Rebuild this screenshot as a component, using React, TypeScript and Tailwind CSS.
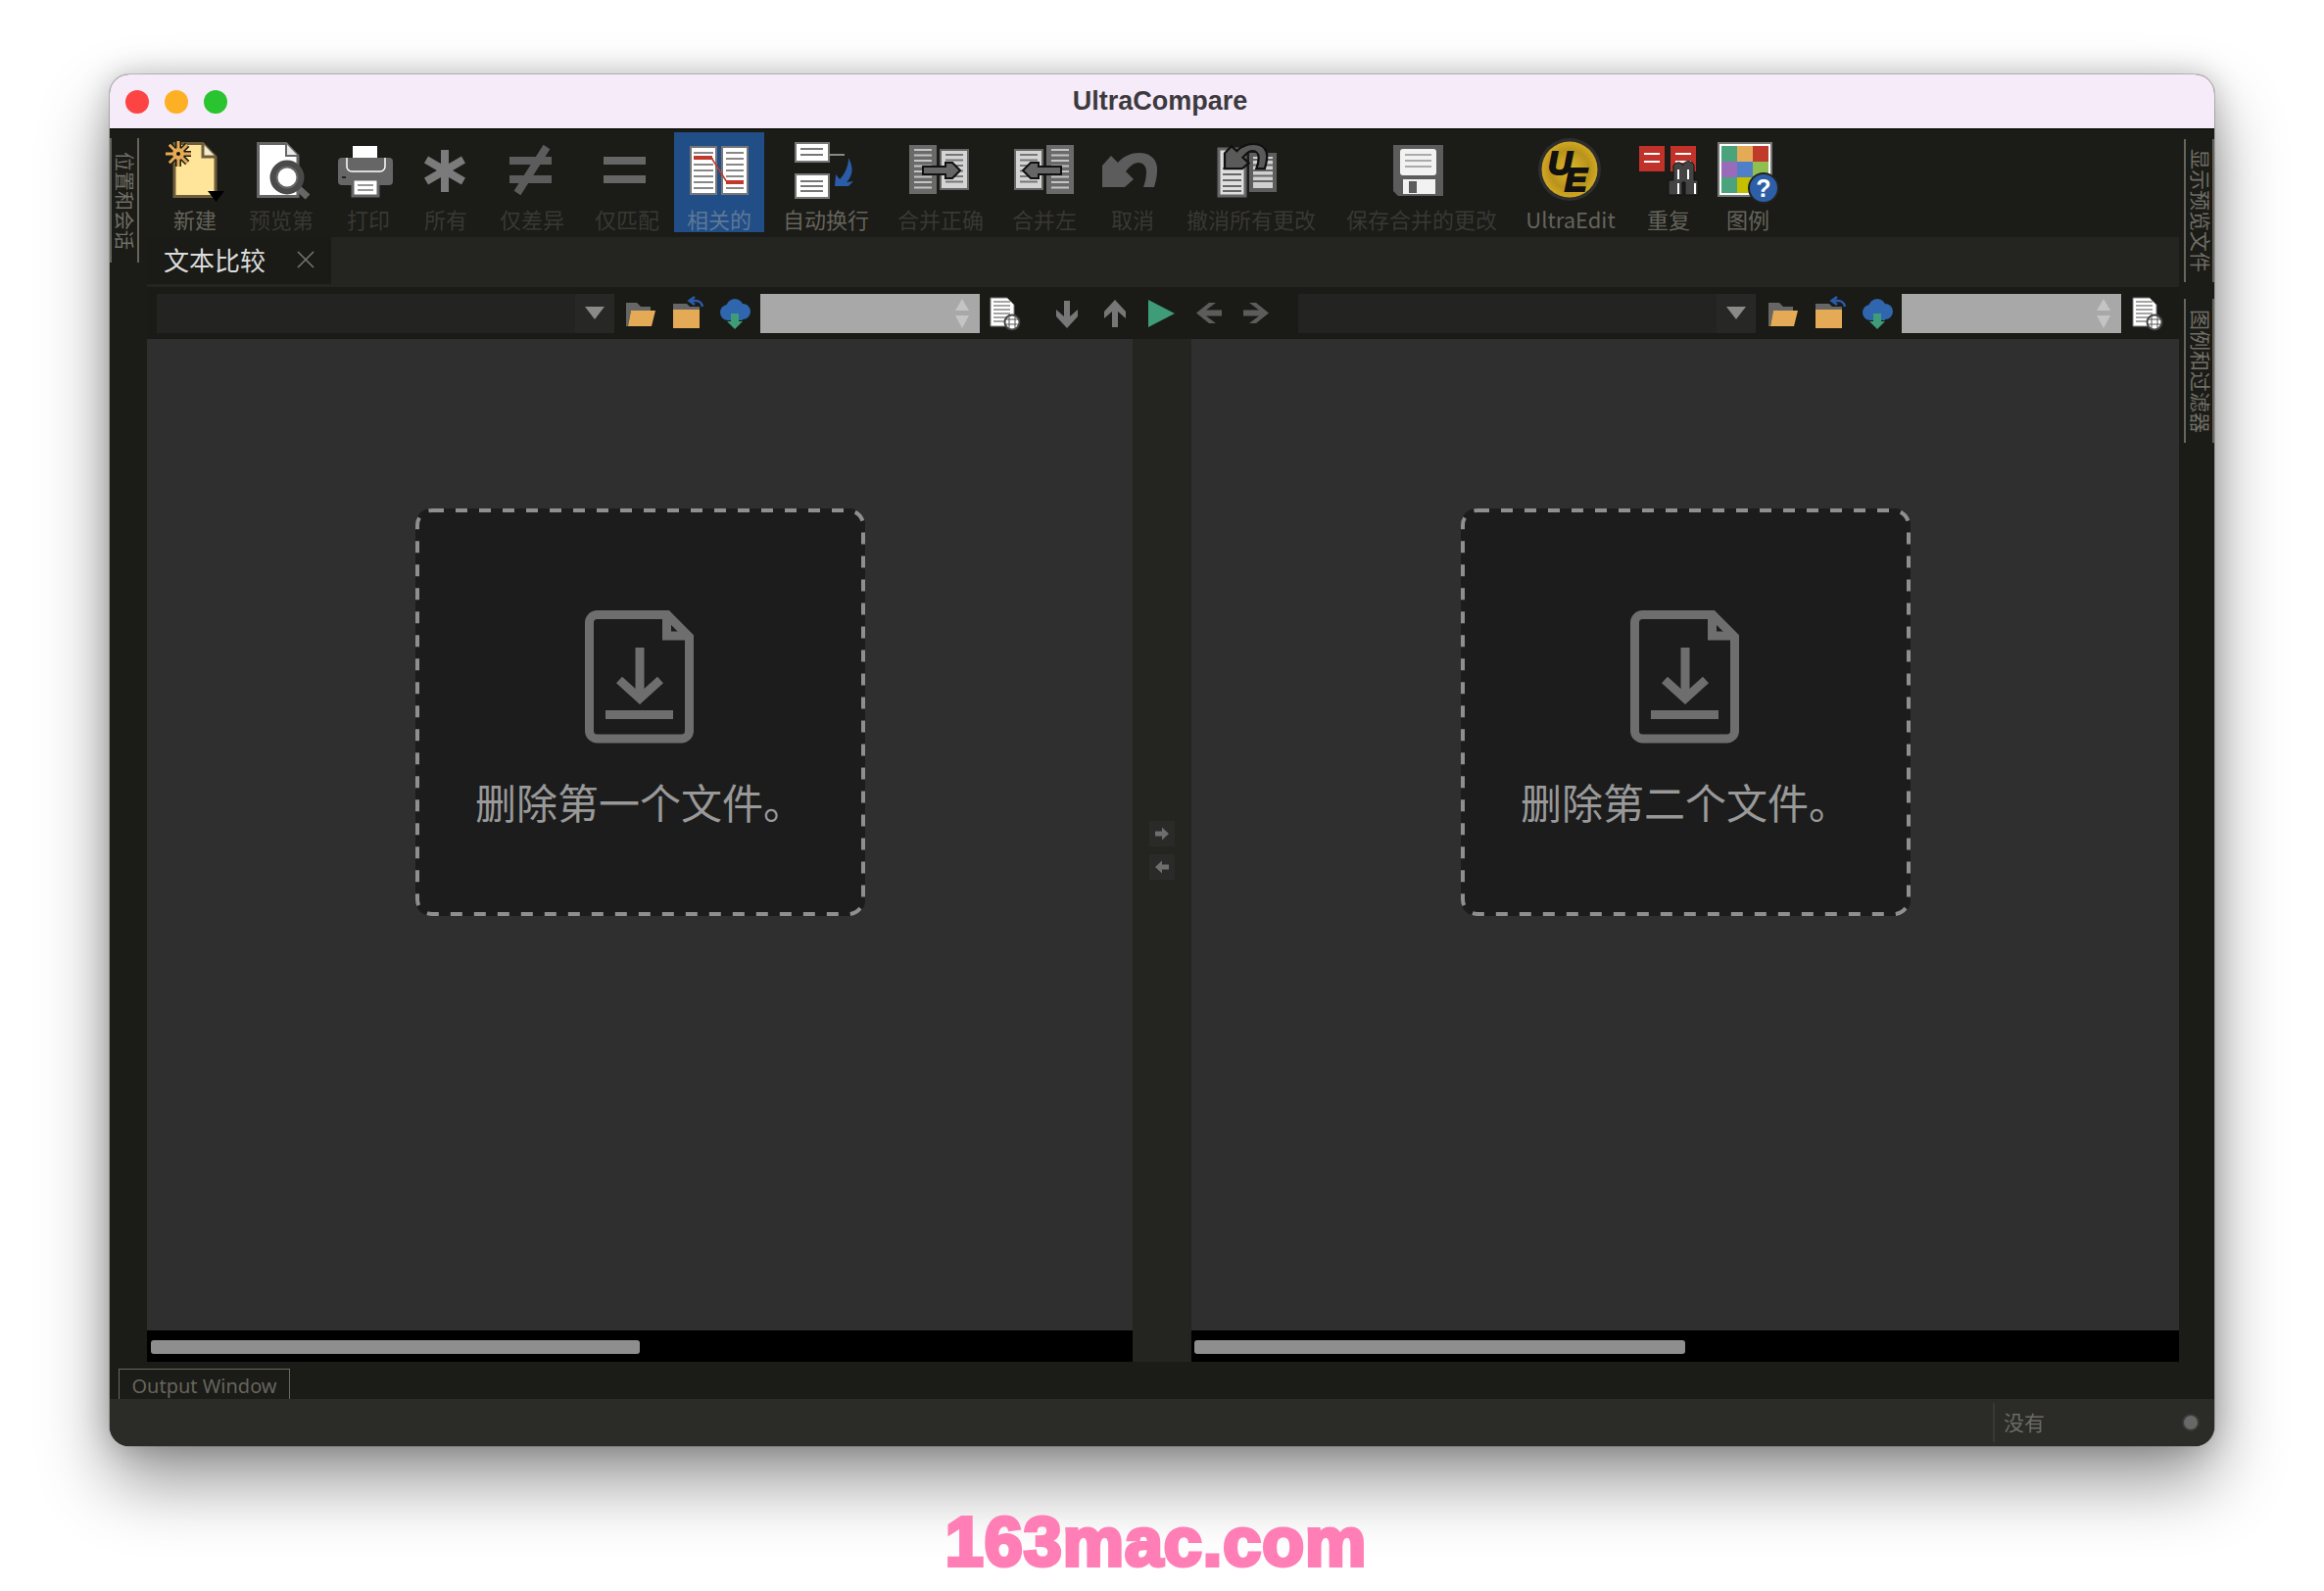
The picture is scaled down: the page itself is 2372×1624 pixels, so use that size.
import React from "react";

const GREY = "#5c5c5c";

function Lines({ x1, x2, ys, color = "#8a8a8a", w = 2 }: { x1: number; x2: number; ys: number[]; color?: string; w?: number }) {
  return (
    <>
      {ys.map((y) => (
        <line key={y} x1={x1} x2={x2} y1={y} y2={y} stroke={color} strokeWidth={w} />
      ))}
    </>
  );
}

function range(a: number, b: number, step: number) {
  const out: number[] = [];
  for (let v = a; v <= b; v += step) out.push(v);
  return out;
}

const UNDO = "M1125 169 L1134 159 L1141 166 C1147 159 1155 156 1163 156 C1176 156 1182 165 1181 175 C1181 181 1179 187 1178 191 H1167 C1169 186 1170 180 1170 175 C1170 170 1167 166 1162 166 C1157 166 1153 170 1149 175 L1157 183 L1148 191 H1125 Z";

function Ico({ cx, w = 80, children }: { cx: number; w?: number; children: React.ReactNode }) {
  return (
    <svg width={w} height={68} viewBox={`${cx - w / 2} 140 ${w} 68`} className="block shrink-0">
      {children}
    </svg>
  );
}

function IconNew() {
  const spokes = [0, 45, 90, 135, 180, 225, 270, 315];
  return (
    <Ico cx={199}>
      <path d="M178 146.5 H207 L220 160 V200.5 H178 Z" fill="#ffe599" stroke="#6d5d3a" strokeWidth="3" />
      <path d="M207 146.5 V160 H220" fill="#f3ead0" stroke="#6d5d3a" strokeWidth="3" />
      {spokes.map((a) => (
        <line key={a} x1="182" y1="157" x2={182 + 13 * Math.cos((a * Math.PI) / 180)} y2={157 + 13 * Math.sin((a * Math.PI) / 180)} stroke="#1a1a16" strokeWidth="6" />
      ))}
      {spokes.map((a) => (
        <line key={`o${a}`} x1="182" y1="157" x2={182 + 13 * Math.cos((a * Math.PI) / 180)} y2={157 + 13 * Math.sin((a * Math.PI) / 180)} stroke="#e5aa55" strokeWidth="3" />
      ))}
      <circle cx="182" cy="157" r="6" fill="#e5aa55" />
      <circle cx="182" cy="157" r="2" fill="#111" />
      <path d="M212 195 H229 L220.5 206 Z" fill="#000" />
    </Ico>
  );
}

function IconPreview() {
  return (
    <Ico cx={287}>
      <path d="M263.5 146.5 H292 L304 159 V200.5 H263.5 Z" fill="#fff" stroke="#666" strokeWidth="3" />
      <path d="M292 146.5 V159 H304" fill="#e8e8e8" stroke="#666" strokeWidth="2" />
      <line x1="302" y1="190" x2="314" y2="201" stroke="#666" strokeWidth="7" />
      <circle cx="293" cy="181" r="14" fill="#fff" stroke="#4a4a4a" strokeWidth="7" />
      <circle cx="293" cy="181" r="10.5" fill="none" stroke="#666" strokeWidth="2" />
    </Ico>
  );
}

function IconPrint() {
  return (
    <Ico cx={376}>
      <rect x="360" y="149" width="25" height="12" fill="#fff" />
      <rect x="345" y="161" width="56" height="28" rx="4" fill="#666" />
      <path d="M354 161 V170 a5 5 0 0 0 5 5 H388 a5 5 0 0 0 5 -5 V161" fill="none" stroke="#fff" strokeWidth="1.5" />
      <rect x="349" y="180" width="4" height="2" fill="#222" />
      <rect x="360" y="183" width="26" height="17" fill="#fff" stroke="#666" strokeWidth="3" />
      <Lines x1={365} x2={381} ys={[189, 194]} color="#999" />
    </Ico>
  );
}

function IconAll() {
  return (
    <Ico cx={455}>
      <g stroke="#7b7b7b" strokeWidth="8">
        <line x1="454" y1="153" x2="454" y2="196" />
        <line x1="435" y1="163" x2="473" y2="185" />
        <line x1="473" y1="163" x2="435" y2="185" />
      </g>
    </Ico>
  );
}

function IconNe() {
  return (
    <Ico cx={543}>
      <g fill={GREY}>
        <rect x="520" y="160" width="43" height="8" />
        <rect x="520" y="179" width="43" height="8" />
      </g>
      <line x1="558" y1="150" x2="528" y2="197" stroke={GREY} strokeWidth="8" />
    </Ico>
  );
}

function IconEq() {
  return (
    <Ico cx={640}>
      <g fill="#666">
        <rect x="616" y="160" width="43" height="8" />
        <rect x="616" y="179" width="43" height="8" />
      </g>
    </Ico>
  );
}

function IconRelated() {
  return (
    <Ico cx={734}>
      <rect x="705" y="150" width="26" height="48" fill="#fff" stroke="#777" strokeWidth="2" />
      <rect x="737" y="150" width="26" height="48" fill="#fff" stroke="#777" strokeWidth="2" />
      <Lines x1={708} x2={728} ys={range(156, 194, 6)} color="#888" />
      <Lines x1={741} x2={759} ys={range(156, 194, 6)} color="#888" />
      <rect x="708" y="159" width="19" height="4" fill="#c0392b" />
      <rect x="741" y="184" width="18" height="4" fill="#c0392b" />
      <line x1="726" y1="161" x2="742" y2="186" stroke="#c0392b" strokeWidth="1.5" />
    </Ico>
  );
}

function IconWrap() {
  return (
    <Ico cx={843}>
      <rect x="812" y="146" width="34" height="19" fill="#fff" stroke="#777" strokeWidth="2" />
      <rect x="812" y="178" width="34" height="24" fill="#fff" stroke="#777" strokeWidth="2" />
      <Lines x1={817} x2={840} ys={[152, 158]} color="#777" />
      <line x1="846" y1="158" x2="862" y2="158" stroke="#888" strokeWidth="2" />
      <Lines x1={817} x2={840} ys={[185, 190, 195]} color="#777" />
      <path d="M866 161 C872 172 870 180 864 186 L871 185 L866 190 H852 L853 178 L857 183 C862 178 866 170 866 161 Z" fill="#2a5ca8" />
    </Ico>
  );
}

function MergeArrowRight() {
  return <path d="M942 170 H965 V166 L972 166 L980 174 L972 182 H965 V178 H942 Z" fill="#666" stroke="#111" strokeWidth="2" />;
}

function IconMergeRight() {
  return (
    <Ico cx={960}>
      <rect x="928" y="148" width="28" height="50" fill="#6a6a6a" />
      <Lines x1={933} x2={951} ys={range(153, 194, 5.5)} color="#c4c4c4" />
      <rect x="960" y="153" width="28" height="40" fill="#d4d4d4" stroke="#666" strokeWidth="2" />
      <Lines x1={965} x2={983} ys={range(158, 190, 5.5)} color="#777" />
      <MergeArrowRight />
    </Ico>
  );
}

function IconMergeLeft() {
  return (
    <Ico cx={1066}>
      <rect x="1068" y="148" width="28" height="50" fill="#6a6a6a" />
      <Lines x1={1073} x2={1091} ys={range(153, 194, 5.5)} color="#c4c4c4" />
      <rect x="1036" y="153" width="28" height="40" fill="#d4d4d4" stroke="#666" strokeWidth="2" />
      <Lines x1={1041} x2={1059} ys={range(158, 190, 5.5)} color="#777" />
      <path d="M1083 170 H1060 V166 L1052 166 L1044 174 L1052 182 H1060 V178 H1083 Z" fill="#666" stroke="#111" strokeWidth="2" />
    </Ico>
  );
}

function IconUndo() {
  return (
    <Ico cx={1156}>
      <path d={UNDO} fill={GREY} />
    </Ico>
  );
}

function IconUndoAll() {
  return (
    <Ico cx={1277}>
      <rect x="1244" y="152" width="27" height="48" fill="#dedede" stroke="#666" strokeWidth="3" />
      <Lines x1={1248} x2={1267} ys={[172, 178, 184, 190, 195]} color="#666" />
      <rect x="1275" y="156" width="28" height="40" fill="#5e5e5e" />
      <rect x="1279" y="160" width="20" height="32" fill="#d0d0d0" />
      <Lines x1={1279} x2={1299} ys={range(163, 190, 5.5)} color="#666" />
      <g transform="translate(1250 147) scale(0.77 0.72) translate(-1125 -156)">
        <path d={UNDO} fill="#5a5a5a" stroke="#111" strokeWidth="3" />
      </g>
    </Ico>
  );
}

function IconSave() {
  return (
    <Ico cx={1451}>
      <path d="M1422 148 H1473 V200 H1427 L1422 195 Z" fill={GREY} />
      <rect x="1429" y="152" width="37" height="27" rx="3" fill="#f2f2f2" />
      <Lines x1={1434} x2={1461} ys={[158, 164, 170]} color="#aaa" />
      <rect x="1432" y="183" width="33" height="15" fill="#f2f2f2" />
      <rect x="1438" y="185" width="8" height="12" fill={GREY} />
    </Ico>
  );
}

function IconUE() {
  return (
    <Ico cx={1603}>
      <defs>
        <radialGradient id="ueGold" cx="50%" cy="50%" r="50%">
          <stop offset="0%" stopColor="#e2b92a" />
          <stop offset="70%" stopColor="#b8931c" />
          <stop offset="100%" stopColor="#d2a821" />
        </radialGradient>
      </defs>
      <ellipse cx="1602" cy="173" rx="32" ry="32" fill="#2e2e2e" />
      <ellipse cx="1602" cy="173" rx="28.5" ry="28.5" fill="url(#ueGold)" />
      <text fontFamily="'Liberation Sans',sans-serif" fontWeight="700" fontStyle="italic" fontSize="34" fill="#111" stroke="#111" strokeWidth="2">
        <tspan x="1580" y="178">U</tspan>
        <tspan x="1597" y="195">E</tspan>
      </text>
    </Ico>
  );
}

function IconRepeat() {
  return (
    <Ico cx={1703}>
      <rect x="1673" y="149" width="26" height="26" fill="#c0322a" />
      <rect x="1705" y="149" width="26" height="26" fill="#c0322a" />
      <Lines x1={1678} x2={1694} ys={[157, 165]} color="#fff" />
      <Lines x1={1710} x2={1726} ys={[157, 165]} color="#fff" />
      <path d="M1708 172 a5 5 0 0 1 9.5 -3 a5 5 0 0 1 11.5 3 V184 H1733 V199 H1720 V186 H1717 V199 H1703 V184 H1708 Z" fill="#444" stroke="#111" strokeWidth="1" />
      <g stroke="#fff" strokeWidth="2">
        <line x1="1713" y1="173" x2="1713" y2="183" />
        <line x1="1723" y1="173" x2="1723" y2="183" />
        <line x1="1713" y1="187" x2="1713" y2="198" />
        <line x1="1730" y1="187" x2="1730" y2="198" />
      </g>
    </Ico>
  );
}

function IconLegend() {
  const cells = [
    ["#4aa37c", "#e5aa55", "#c0392b"],
    ["#9a6bb8", "#4f7fc8", "#8fbf4f"],
    ["#4aa37c", "#c4c000", "#fff"],
  ];
  return (
    <Ico cx={1784}>
      <rect x="1754" y="146" width="54" height="54" fill="#fff" stroke="#777" strokeWidth="2" />
      {cells.map((row, r) =>
        row.map((c, i) => <rect key={`${r}${i}`} x={1757 + i * 16} y={149 + r * 16} width="16" height="16" fill={c} />)
      )}
      <circle cx="1800" cy="192" r="15" fill="#2d5fa8" stroke="#222" strokeWidth="2" />
      <text x="1800" y="201" textAnchor="middle" fontFamily="'Liberation Sans',sans-serif" fontWeight="700" fontSize="25" fill="#fff">?</text>
    </Ico>
  );
}

type Tool = { label: string; w: string; icon: React.ReactNode; tone: string; bg?: string };

const ON = "text-[#65645c]";
const OFF = "text-[#383834]";

const TOOLS: Tool[] = [
  { label: "新建", w: "w-[78px]", icon: <IconNew />, tone: ON },
  { label: "预览第", w: "w-[98px]", icon: <IconPreview />, tone: OFF },
  { label: "打印", w: "w-[80px]", icon: <IconPrint />, tone: OFF },
  { label: "所有", w: "w-[78px]", icon: <IconAll />, tone: OFF },
  { label: "仅差异", w: "w-[98px]", icon: <IconNe />, tone: OFF },
  { label: "仅匹配", w: "w-[96px]", icon: <IconEq />, tone: OFF },
  { label: "相关的", w: "w-[92px]", icon: <IconRelated />, tone: "text-[#5f7896]", bg: "bg-[#214e87]" },
  { label: "自动换行", w: "w-[126px]", icon: <IconWrap />, tone: ON },
  { label: "合并正确", w: "w-[108px]", icon: <IconMergeRight />, tone: OFF },
  { label: "合并左", w: "w-[104px]", icon: <IconMergeLeft />, tone: OFF },
  { label: "取消", w: "w-[76px]", icon: <IconUndo />, tone: OFF },
  { label: "撤消所有更改", w: "w-[166px]", icon: <IconUndoAll />, tone: OFF },
  { label: "保存合并的更改", w: "w-[182px]", icon: <IconSave />, tone: OFF },
  { label: "UltraEdit", w: "w-[122px]", icon: <IconUE />, tone: ON },
  { label: "重复", w: "w-[78px]", icon: <IconRepeat />, tone: ON },
  { label: "图例", w: "w-[84px]", icon: <IconLegend />, tone: ON },
];

function SideTab({ label, cls }: { label: string; cls: string }) {
  return (
    <div className={`flex items-center justify-center whitespace-nowrap border-[#66655c] text-[#706f66] leading-[24px] [writing-mode:vertical-rl] [text-orientation:sideways] ${cls}`}>
      {label}
    </div>
  );
}

function Combo() {
  return (
    <div className="flex h-[40px] w-[467px] shrink-0 bg-[#232321]">
      <div className="flex-1" />
      <div className="flex w-[40px] items-center justify-center bg-[#272725]">
        <svg width="20" height="13" viewBox="0 0 20 13">
          <path d="M0 0 H20 L10 13 Z" fill="#8a8a8a" />
        </svg>
      </div>
    </div>
  );
}

function Spin() {
  return (
    <div className="flex h-[40px] w-[224px] shrink-0 items-center justify-end bg-[#a8a8a8] pr-[10px]">
      <svg width="16" height="32" viewBox="0 0 16 32">
        <path d="M8 1 L15 13 H1 Z M1 18 H15 L8 31 Z" fill="#c4c4c4" />
      </svg>
    </div>
  );
}

function FileTools({ shift = 0 }: { shift?: number }) {
  return (
    <svg width="149" height="53" viewBox="0 0 149 53" className="shrink-0">
      <g transform={`translate(${shift} 0)`}>
        <path d="M12 40 V16 H23 L27 20 H37 V24 H17 L14 40 Z" fill="#666" />
        <path d="M17 24 H42 L38 40 H14 Z" fill="#e5aa55" />
        <path d="M60 23 V17 H74 L77 20 H87 V23 Z" fill="#666" />
        <rect x="60" y="23" width="27" height="19" fill="#e5aa55" />
        <path d="M90 20 a7 7 0 0 0 -7 -6 H77 M82 10 L76.5 14 L82 18" fill="none" stroke="#2a5ca8" strokeWidth="2.5" />
        <g fill="#2f66ad">
          <circle cx="116" cy="26" r="8" />
          <circle cx="123" cy="21" r="9" />
          <circle cx="131" cy="25" r="8" />
          <rect x="116" y="24" width="15" height="10" />
        </g>
        <path d="M119 27 H127 V35 H131 L123 43 L115 35 H119 Z" fill="#3f9c78" />
      </g>
    </svg>
  );
}

function DocGlobe() {
  return (
    <g>
      <path d="M1 11 H18 L25 18 V40 H1 Z" fill="#fff" stroke="#777" strokeWidth="1" />
      <Lines x1={4} x2={21} ys={[15, 19, 23, 27, 31, 35]} color="#888" w={1.5} />
      <circle cx="23" cy="36" r="7.5" fill="#fff" stroke="#444" strokeWidth="2" />
      <g stroke="#555" strokeWidth="1">
        <line x1="16" x2="30" y1="33" y2="33" />
        <line x1="16" x2="30" y1="38" y2="38" />
        <line x1="20" x2="20" y1="29" y2="43" />
        <line x1="26" x2="26" y1="29" y2="43" />
      </g>
    </g>
  );
}

function MiddleTools() {
  return (
    <svg width="325" height="53" viewBox="1000 293 325 53" className="shrink-0">
      <g transform="translate(1010 293)">
        <DocGlobe />
      </g>
      <path d="M1086 307 H1092 V323 L1100 316 V323 L1089 335 L1078 323 V316 L1086 323 Z" fill="#777" />
      <path d="M1135 334 H1141 V318 L1149 325 V318 L1138 306 L1127 318 V325 L1135 318 Z" fill="#777" />
      <path d="M1172 306 L1199 320 L1172 334 Z" fill="#3f9c78" />
      <path d="M1234 309 L1221 319.5 L1234 330 H1241 L1231 322.5 H1247 V316.5 H1231 L1241 309 Z" fill={GREY} />
      <path d="M1282 309 L1295 319.5 L1282 330 H1275 L1285 322.5 H1269 V316.5 H1285 L1275 309 Z" fill={GREY} />
    </svg>
  );
}

function DropZone({ text }: { text: string }) {
  return (
    <div className="relative flex h-[416px] w-[459px] flex-col items-center rounded-[16px] bg-[#1c1c1c] pt-[104px]">
      <svg width="459" height="416" viewBox="0 0 459 416" className="absolute inset-0">
        <rect x="2" y="2" width="455" height="412" rx="15" fill="none" stroke="#8f8f8f" strokeWidth="4" strokeDasharray="12 12" />
      </svg>
      <svg width="111" height="136" viewBox="0 0 111 136" className="-ml-[2px] block">
        <g fill="none" stroke="#6e6e6e" strokeWidth="9">
          <path d="M12.5 4.5 H84 L106.5 27 V123 a8 8 0 0 1 -8 8 H12.5 a8 8 0 0 1 -8 -8 V12.5 a8 8 0 0 1 8 -8 Z" />
          <path d="M83.5 5 V26 H106" />
          <line x1="56" y1="38" x2="56" y2="86" />
          <path d="M35 71 L56 90 L77 71" />
          <line x1="21" y1="106.5" x2="90" y2="106.5" />
        </g>
      </svg>
      <div className="mt-[31px] text-[42px] leading-[56px] text-[#999999]">{text}</div>
    </div>
  );
}

function Pane({ w, text, thumb }: { w: string; text: string; thumb: string }) {
  return (
    <div className={`flex shrink-0 flex-col ${w}`}>
      <div className="flex flex-1 justify-center bg-[#2f2f2f] pt-[173px]">
        <DropZone text={text} />
      </div>
      <div className="h-[32px] bg-black pt-[10px]">
        <div className={`h-[14px] rounded-[3px] bg-[#8e8e8e] ${thumb}`} />
      </div>
    </div>
  );
}

export default function App() {
  return (
    <div className="flex h-[1624px] w-[2372px] flex-col items-center overflow-hidden bg-white pt-[76px] font-['Noto_Sans_CJK_SC',sans-serif]">
      <div className="flex h-[1400px] w-[2148px] shrink-0 flex-col overflow-hidden rounded-[20px] bg-[#1b1b17] shadow-[0_36px_70px_rgba(0,0,0,0.42),0_0_30px_rgba(0,0,0,0.22),0_0_0_1px_rgba(0,0,0,0.18)]">
        <div className="flex h-[56px] shrink-0 items-center border-b border-black bg-[#f6ebf9] pl-[16px]">
          <div className="flex w-[120px] gap-[16px]">
            <span className="h-[24px] w-[24px] rounded-full bg-[#fd4444]" />
            <span className="h-[24px] w-[24px] rounded-full bg-[#feb024]" />
            <span className="h-[24px] w-[24px] rounded-full bg-[#29c430]" />
          </div>
          <div className="flex-1 pr-[140px] text-center font-['Liberation_Sans',sans-serif] text-[27px] font-bold text-[#3c3a3e]">UltraCompare</div>
        </div>

        <div className="flex min-h-0 flex-1">
          <div className="w-[38px] shrink-0 pt-[9px]">
            <SideTab label="位置和会话" cls="h-[127px] w-[30px] border-y-2 border-r-2 text-[20px]" />
          </div>

          <div className="flex w-[2074px] shrink-0 flex-col pb-[7px]">
            <div className="flex h-[110px] shrink-0 pl-[10px] pt-[3px]">
              {TOOLS.map((t) => (
                <div key={t.label} className={`flex h-[102px] shrink-0 flex-col items-center pt-[5px] ${t.w} ${t.bg ?? ""}`}>
                  {t.icon}
                  <div className={`mt-[2px] whitespace-nowrap text-[22px] leading-[26px] ${t.tone}`}>{t.label}</div>
                </div>
              ))}
            </div>

            <div className="flex h-[51px] shrink-0 bg-[#242421]">
              <div className="flex h-[48px] w-[188px] items-center justify-between bg-[#1a1a17] pb-[3px] pl-[17px] pr-[17px]">
                <span className="text-[26px] text-[#dddddd]">文本比较</span>
                <svg width="18" height="18" viewBox="0 0 18 18">
                  <path d="M1 1 L17 17 M17 1 L1 17" stroke="#777" strokeWidth="1.5" />
                </svg>
              </div>
            </div>

            <div className="flex h-[53px] shrink-0 items-center bg-[#1a1a17] pl-[10px]">
              <Combo />
              <FileTools />
              <Spin />
              <MiddleTools />
              <Combo />
              <FileTools shift={1} />
              <Spin />
              <svg width="58" height="53" viewBox="0 0 58 53" className="shrink-0">
                <g transform="translate(11 0)">
                  <DocGlobe />
                </g>
              </svg>
            </div>

            <div className="flex min-h-0 flex-1">
              <Pane w="w-[1006px]" text="删除第一个文件。" thumb="ml-[4px] w-[499px]" />
              <div className="flex w-[60px] shrink-0 flex-col items-center bg-[#242421] pt-[492px]">
                <div className="flex h-[26px] w-[26px] items-center justify-center bg-[#2a2a28]">
                  <svg width="14" height="14" viewBox="0 0 14 14">
                    <path d="M0 4.5 H7 V0.5 L14 7 L7 13.5 V9.5 H0 Z" fill="#6e6e6e" />
                  </svg>
                </div>
                <div className="mt-[8px] flex h-[26px] w-[26px] items-center justify-center bg-[#2a2a28]">
                  <svg width="14" height="14" viewBox="0 0 14 14">
                    <path d="M14 4.5 H7 V0.5 L0 7 L7 13.5 V9.5 H14 Z" fill="#6e6e6e" />
                  </svg>
                </div>
              </div>
              <Pane w="w-[1008px]" text="删除第二个文件。" thumb="ml-[3px] w-[501px]" />
            </div>
          </div>

          <div className="flex w-[36px] shrink-0 flex-col items-end pt-[10px]">
            <SideTab label="显示预览文件" cls="h-[146px] w-[31px] border-y-2 border-l-2 pl-[4px] text-[21px]" />
            <SideTab label="图例和过滤器" cls="mt-[17px] h-[147px] w-[31px] border-y-2 border-l-2 pl-[4px] text-[21px]" />
          </div>
        </div>

        <div className="flex h-[31px] shrink-0 pl-[9px]">
          <div className="flex w-[175px] items-center justify-center border-x border-t border-[#6a695f] pt-[3px] font-['Noto_Sans',sans-serif] text-[20px] leading-[24px] text-[#66655d]">Output Window</div>
        </div>

        <div className="flex h-[48px] shrink-0 items-center justify-end bg-[#2b2b28]">
          <div className="flex h-[40px] w-[226px] items-center border-l-2 border-[#383835] pl-[9px] pr-[15px]">
            <span className="text-[21px] text-[#6a6a66]">没有</span>
            <span className="ml-auto h-[18px] w-[18px] rounded-full border-2 border-[#3a3a38] bg-[#686868]" />
          </div>
        </div>
      </div>

      <div className="mr-[12px] mt-[50px] font-['Liberation_Sans',sans-serif] text-[70px] font-bold leading-[96px] tracking-[1px] text-[#ff7eb6] [-webkit-text-stroke:4px_#ff7eb6]">163mac.com</div>
    </div>
  );
}
